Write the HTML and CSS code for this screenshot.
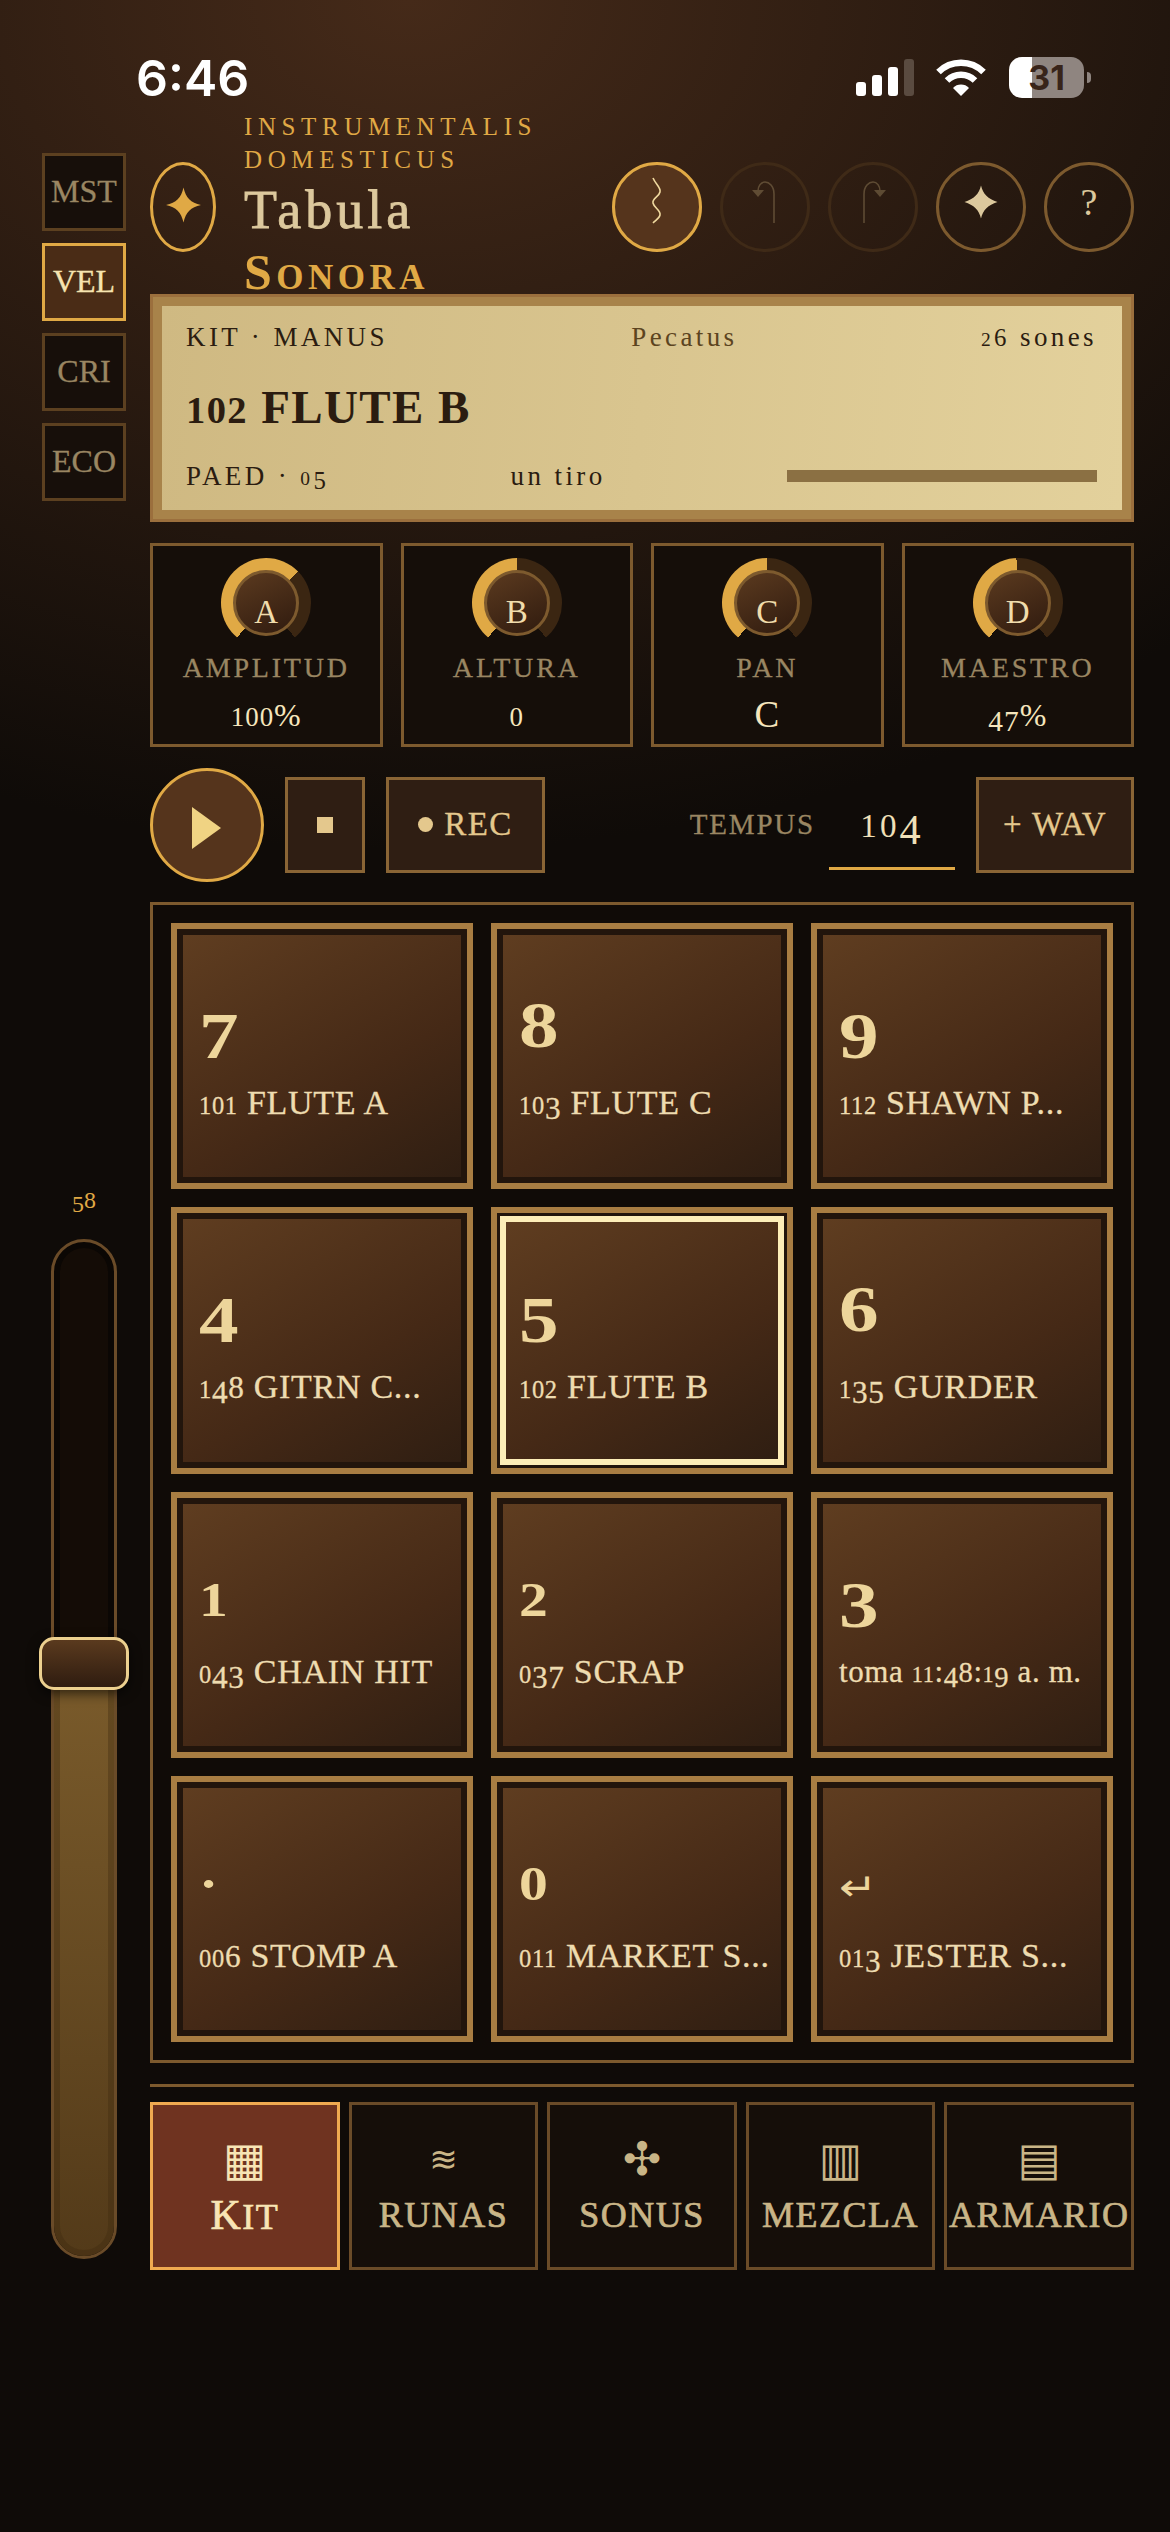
FILE: index.html
```html
<!DOCTYPE html>
<html lang="es">
<head>
<meta charset="utf-8">
<title>Tabula Sonora</title>
<link rel="stylesheet" href="styles.css">
</head>
<body>
<div class="status">
  <div class="time">6:46</div>
  <div class="status-right">
    <svg class="signal" viewBox="0 0 58 37"><rect x="0" y="23" width="10" height="14" rx="3" fill="#fff"/><rect x="16" y="16" width="10" height="21" rx="3" fill="#fff"/><rect x="32" y="8" width="10" height="29" rx="3" fill="#fff"/><rect x="48" y="0" width="10" height="37" rx="3" fill="#5a4b40"/></svg>
    <svg class="wifi" viewBox="0 0 50 37"><path d="M2.5 13A32 32 0 0 1 47.5 13" fill="none" stroke="#fff" stroke-width="6.5"/><path d="M11 21.5A20 20 0 0 1 39 21.5" fill="none" stroke="#fff" stroke-width="6.5"/><path d="M25 37L17 29A11 11 0 0 1 33 29Z" fill="#fff"/></svg>
    <div class="battery">31</div>
    <div class="nub"></div>
  </div>
</div>

<div class="app">
  <aside class="side">
    <div class="chan">MST</div>
    <div class="chan on">VEL</div>
    <div class="chan">CRI</div>
    <div class="chan">ECO</div>
    <div class="fader-box">
      <div class="fader-val"><span class="nd">5</span><span class="na">8</span></div>
      <div class="fader">
        <div class="fader-fill"></div>
        <div class="thumb"></div>
      </div>
    </div>
  </aside>

  <main class="main">
    <header class="head">
      <div class="logo">
        <svg class="logo-star" viewBox="0 0 24 24"><path d="M12 0C13.5 7 17 10.5 24 12C17 13.5 13.5 17 12 24C10.5 17 7 13.5 0 12C7 10.5 10.5 7 12 0Z"/></svg>
      </div>
      <div class="brand">
        <div class="eyebrow">INSTRUMENTALIS DOMESTICUS</div>
        <div class="t1">Tabula</div>
        <div class="t2">Sonora</div>
      </div>
      <div class="tools">
        <button class="tool active"><svg viewBox="0 0 84 84"><path d="M38 13C41 20 46 22 45 27C44 32 37 33 38 38C39 43 46 45 45 50C44.5 53 41 55 38 58" fill="none" stroke="#f0d99f" stroke-width="1.6"/></svg></button>
        <button class="tool off"><svg viewBox="0 0 84 84"><path d="M51 58V29C51 21 46 17 42 17C38 17 35 21 35 26" fill="none" stroke="#8f7a56" stroke-width="1.6"/><path d="M29 25H41L35 32Z" fill="#8f7a56"/></svg></button>
        <button class="tool off"><svg viewBox="0 0 84 84"><path d="M33 58V29C33 21 38 17 42 17C46 17 49 21 49 26" fill="none" stroke="#8f7a56" stroke-width="1.6"/><path d="M43 25H55L49 32Z" fill="#8f7a56"/></svg></button>
        <button class="tool"><svg viewBox="0 0 84 84"><path d="M42 20.5C44 29 49 34 58.5 37C49 40 44 45 42 53.5C40 45 35 40 25.5 37C35 34 40 29 42 20.5Z" fill="#dcc89d"/></svg></button>
        <button class="tool ask">?</button>
      </div>
    </header>

    <section class="lcd">
      <div class="lcd-in">
        <div class="lcd-row">
          <span>KIT · MANUS</span>
          <span class="dim">Pecatus</span>
          <span><span class="no">2</span><span class="na">6</span> sones</span>
        </div>
        <div class="lcd-name"><span class="no">102</span> FLUTE B</div>
        <div class="lcd-row">
          <span>PAED · <span class="no">0</span><span class="nd">5</span></span>
          <span>un tiro</span>
          <span class="lcd-bar"></span>
        </div>
      </div>
    </section>

    <section class="knobs">
      <div class="knob-card">
        <div class="dial" style="--fill:185deg"><div class="cap">A</div></div>
        <div class="k-label">AMPLITUD</div>
        <div class="k-val"><span class="no">100</span>%</div>
      </div>
      <div class="knob-card">
        <div class="dial" style="--fill:140deg"><div class="cap">B</div></div>
        <div class="k-label">ALTURA</div>
        <div class="k-val"><span class="no">0</span></div>
      </div>
      <div class="knob-card">
        <div class="dial" style="--fill:140deg"><div class="cap">C</div></div>
        <div class="k-label">PAN</div>
        <div class="k-val big">C</div>
      </div>
      <div class="knob-card">
        <div class="dial" style="--fill:138deg"><div class="cap">D</div></div>
        <div class="k-label">MAESTRO</div>
        <div class="k-val"><span class="nd">47</span>%</div>
      </div>
    </section>

    <section class="transport">
      <button class="play"><svg viewBox="0 0 29 42"><path d="M0 0L29 21L0 42Z" fill="#f0d383"/></svg></button>
      <button class="tbtn stop"><span class="square"></span></button>
      <button class="tbtn rec"><span class="dot"></span>REC</button>
      <div class="tempo-label">TEMPUS</div>
      <div class="tempo"><span class="no">10</span><span class="nd">4</span></div>
      <button class="tbtn wav">+ WAV</button>
    </section>

    <section class="pads">
      <div class="pad"><div class="pad-in"><div class="key"><span class="kd">7</span></div><div class="name"><span class="no">101</span> FLUTE A</div></div></div>
      <div class="pad"><div class="pad-in"><div class="key">8</div><div class="name"><span class="no">10</span><span class="nd">3</span> FLUTE C</div></div></div>
      <div class="pad"><div class="pad-in"><div class="key"><span class="kd">9</span></div><div class="name"><span class="no">112</span> SHAWN P...</div></div></div>
      <div class="pad"><div class="pad-in"><div class="key"><span class="kd">4</span></div><div class="name"><span class="no">1</span><span class="nd">4</span><span class="na">8</span> GITRN C...</div></div></div>
      <div class="pad sel"><div class="pad-in"><div class="key"><span class="kd">5</span></div><div class="name"><span class="no">102</span> FLUTE B</div></div></div>
      <div class="pad"><div class="pad-in"><div class="key">6</div><div class="name"><span class="no">1</span><span class="nd">35</span> GURDER</div></div></div>
      <div class="pad"><div class="pad-in"><div class="key"><span class="ko">1</span></div><div class="name"><span class="no">0</span><span class="nd">43</span> CHAIN HIT</div></div></div>
      <div class="pad"><div class="pad-in"><div class="key"><span class="ko">2</span></div><div class="name"><span class="no">0</span><span class="nd">37</span> SCRAP</div></div></div>
      <div class="pad"><div class="pad-in"><div class="key"><span class="kd">3</span></div><div class="name small">toma <span class="no">11</span>:<span class="nd">4</span><span class="na">8</span>:<span class="no">1</span><span class="nd">9</span> a. m.</div></div></div>
      <div class="pad"><div class="pad-in"><div class="key"><span class="ko">·</span></div><div class="name"><span class="no">00</span><span class="na">6</span> STOMP A</div></div></div>
      <div class="pad"><div class="pad-in"><div class="key"><span class="ko">0</span></div><div class="name"><span class="no">011</span> MARKET S...</div></div></div>
      <div class="pad"><div class="pad-in"><div class="key"><span class="kr">↵</span></div><div class="name"><span class="no">01</span><span class="nd">3</span> JESTER S...</div></div></div>
    </section>

    <nav class="tabs">
      <div class="tab on"><div class="tab-ico">▦</div><div class="tab-label">KIT</div></div>
      <div class="tab"><div class="tab-ico wave">≋</div><div class="tab-label">RUNAS</div></div>
      <div class="tab"><div class="tab-ico">✣</div><div class="tab-label">SONUS</div></div>
      <div class="tab"><div class="tab-ico">▥</div><div class="tab-label">MEZCLA</div></div>
      <div class="tab"><div class="tab-ico">▤</div><div class="tab-label">ARMARIO</div></div>
    </nav>
  </main>
</div>
</body>
</html>
```
FILE: styles.css
```css
* { box-sizing: border-box; }
html, body { margin: 0; padding: 0; }
body {
  width: 1170px;
  height: 2532px;
  overflow: hidden;
  font-family: "Liberation Serif", serif;
  color: #eedcb0;
  background: #0f0b08 radial-gradient(ellipse 1170px 850px at 35% 0, #452a19, #0f0b08) no-repeat;
}
button { font-family: inherit; padding: 0; margin: 0; cursor: pointer; }

/* old-style numeral approximations */
.no { font-size: .72em; }
.nd { font-size: .92em; vertical-align: -.16em; line-height: 0; }
.na { font-size: .92em; line-height: 0; }

/* status bar */
.status {
  height: 120px;
  padding: 57px 79px 0 136px;
  display: flex;
  justify-content: space-between;
  align-items: flex-start;
}
.time {
  font-family: Inter, sans-serif;
  font-weight: 600;
  font-size: 50px;
  line-height: 43px;
  color: #fff;
}
.status-right { display: flex; align-items: center; height: 41px; }
.signal { width: 58px; height: 37px; margin-right: 22px; }
.wifi { width: 50px; height: 37px; margin-right: 23px; }
.battery {
  width: 75px;
  height: 41px;
  border-radius: 13px;
  background: linear-gradient(90deg, #fff 31%, #8f8580 31%);
  font-family: Inter, sans-serif;
  font-weight: 700;
  font-size: 34px;
  line-height: 41px;
  text-align: center;
  color: #38241a;
}
.nub { width: 4px; height: 11px; margin-left: 3px; border-radius: 0 4px 4px 0; background: #8f8580; }

/* layout */
.app { display: flex; gap: 24px; padding: 0 36px 0 42px; height: 2151px; }
.side { width: 84px; flex: none; display: flex; flex-direction: column; gap: 12px; padding: 33px 0 12px; }
.main { flex: 1; min-width: 0; }

.chan {
  height: 78px;
  border: 3px solid #5c4020;
  background: #170f0a;
  color: #9a8662;
  font-size: 32px;
  padding-bottom: 2px;
  display: flex;
  align-items: center;
  justify-content: center;
  -webkit-text-stroke: .3px currentColor;
}
.chan.on { border-color: #e0a945; background: #4a2c16; color: #f6e4b0; }

.fader-box { margin-top: auto; display: flex; flex-direction: column; align-items: center; }
.fader-val { color: #e0a945; font-size: 26px; line-height: 30px; height: 54px; }
.fader {
  position: relative;
  width: 66px;
  height: 1020px;
  border: 3px solid #6a4b28;
  border-radius: 33px;
  background: #140c06;
  box-shadow: inset 0 0 0 6px #0b0704;
  display: flex;
  align-items: flex-end;
}
.fader-fill {
  width: 100%;
  height: 58%;
  border-radius: 0 0 30px 30px;
  background: linear-gradient(180deg, #7a5b2b, #533a19);
  box-shadow: inset 0 0 0 6px rgba(60, 40, 15, .35);
}
.thumb {
  position: absolute;
  left: -15px;
  top: 395px;
  width: 90px;
  height: 53px;
  border: 3px solid #ecd08f;
  border-radius: 15px;
  background: linear-gradient(180deg, #5a3a1e, #2f1c10);
  box-shadow: 0 4px 12px rgba(0, 0, 0, .6);
}

/* header */
.head { height: 174px; display: flex; align-items: center; }
.logo {
  width: 66px;
  height: 90px;
  flex: none;
  border: 3px solid #e0a945;
  border-radius: 50%;
  display: flex;
  align-items: center;
  justify-content: center;
}
.logo-star { width: 35px; height: 36px; fill: #e0a945; margin-top: -5px; }
.brand { width: 340px; flex: none; margin-left: 28px; }
.eyebrow { color: #e0a945; font-size: 25px; line-height: 33px; letter-spacing: 5.6px; margin-top: -2px; }
.t1 { color: #dcc89d; font-size: 54px; line-height: 64px; letter-spacing: 4px; -webkit-text-stroke: .8px currentColor; margin-top: 2px; }
.t2 { color: #e0a945; font-size: 50px; line-height: 60px; font-weight: 700; font-variant: small-caps; letter-spacing: 4.5px; }
.tools { margin-left: auto; display: flex; gap: 18px; }
.tool {
  width: 90px;
  height: 90px;
  border: 3px solid #7d5a2e;
  border-radius: 50%;
  background: transparent;
  display: block;
}
.tool svg { display: block; width: 84px; height: 84px; }
.tool.active { background: #55341c; border-color: #e0a945; }
.tool.off { border-color: #3f2a17; }
.tool.off svg { opacity: .5; }
.tool.ask { color: #dcc89d; font-size: 38px; line-height: 72px; padding-bottom: 10px; }

/* lcd */
.lcd {
  height: 228px;
  border: 3px solid #9b6f3d;
  background: #a8834a;
  padding: 9px;
  position: relative;
}
.lcd-in {
  height: 100%;
  background: linear-gradient(95deg, #cfb982, #e3d19c);
  padding: 11px 25px 0 24px;
  color: #2b1c10;
  display: flex;
  flex-direction: column;
}
.lcd-row {
  display: flex;
  justify-content: space-between;
  align-items: center;
  height: 40px;
  font-size: 27px;
  letter-spacing: 3.4px;
}
.dim { color: #5c4420; }
.lcd-name { font-size: 47px; line-height: 90px; font-weight: 700; letter-spacing: 1.4px; margin: 5px 0 1px; }
.lcd-name .no { font-size: .82em; }
.lcd-bar { width: 310px; height: 12px; background: #8b7043; }

/* knobs */
.knobs { display: grid; grid-template-columns: repeat(4, 1fr); gap: 18px; margin-top: 21px; }
.knob-card {
  height: 204px;
  border: 3px solid #7d5a2e;
  background: #150e09;
  padding-top: 12px;
  display: flex;
  flex-direction: column;
  align-items: center;
}
.dial {
  width: 90px;
  height: 90px;
  flex: none;
  border-radius: 50%;
  background: conic-gradient(from 220deg, #e0a945 var(--fill), #3b2612 var(--fill), #3b2612 280deg, transparent 280deg);
  display: flex;
  align-items: center;
  justify-content: center;
}
.cap {
  width: 66px;
  height: 66px;
  border: 3px solid #7d5a2e;
  border-radius: 50%;
  background: linear-gradient(155deg, #5b3a1f, #301b0f);
  color: #f0dcac;
  font-size: 33px;
  line-height: 1;
  display: flex;
  align-items: flex-end;
  justify-content: center;
  padding-bottom: 4px;
}
.k-label { color: #9a8662; font-size: 28px; line-height: 36px; letter-spacing: 2.8px; margin-top: 2px; -webkit-text-stroke: .3px currentColor; }
.k-val { color: #f6e6bd; font-size: 32px; line-height: 40px; margin-top: 9px; letter-spacing: 1px; }
.k-val .no { font-size: .84em; }
.k-val.big { font-size: 37px; }

/* transport */
.transport { display: flex; align-items: center; margin-top: 21px; height: 113px; }
.play {
  width: 114px;
  height: 114px;
  flex: none;
  border: 3px solid #e0a945;
  border-radius: 50%;
  background: #55341c;
  display: flex;
  align-items: center;
  justify-content: center;
  margin-right: 21px;
}
.play svg { width: 29px; height: 42px; margin: 6px 0 0 -2px; }
.tbtn {
  height: 96px;
  flex: none;
  border: 3px solid #8a6535;
  background: #2f1e13;
  color: #e4c88d;
  font-size: 33px;
  letter-spacing: 1.4px;
  display: flex;
  align-items: center;
  justify-content: center;
  -webkit-text-stroke: .3px currentColor;
}
.stop { width: 80px; margin-right: 21px; }
.square { width: 16px; height: 16px; background: #e4c88d; }
.rec { width: 159px; }
.dot { width: 15px; height: 15px; border-radius: 50%; background: #e4c88d; margin-right: 11px; }
.tempo-label { margin-left: auto; color: #9a8662; font-size: 29px; letter-spacing: 1.8px; margin-right: 14px; -webkit-text-stroke: .3px currentColor; }
.tempo {
  width: 126px;
  height: 90px;
  border-bottom: 3px solid #e0a945;
  color: #f0e0b8;
  font-size: 46px;
  line-height: 84px;
  text-align: center;
  margin-right: 21px;
  letter-spacing: 3px;
}
.wav { width: 158px; }

/* pads */
.pads {
  display: grid;
  grid-template-columns: repeat(3, 1fr);
  grid-auto-rows: 266.25px;
  gap: 18px;
  margin-top: 21px;
  padding: 18px;
  border: 3px solid #7d5a2e;
  background: #100b07;
}
.pad {
  border: 6px solid #a87d42;
  background: #22150c;
  padding: 6px;
  display: flex;
}
.pad-in {
  flex: 1;
  min-width: 0;
  padding: 55px 0 0 16px;
  background-image: linear-gradient(150deg, #5f3d20 0%, #452916 60%, #2f1e12 100%);
}
.pad.sel { padding: 3px; }
.pad.sel .pad-in { border: 6px solid #fdeeb8; padding: 52px 0 0 13px; }
.key {
  height: 70px;
  font-size: 66px;
  line-height: 70px;
  font-weight: 700;
  color: #edd59b;
  transform: scaleX(1.2);
  transform-origin: left center;
}
.kd { vertical-align: -11px; line-height: 0; }
.ko { font-size: 48px; line-height: 0; }
.kr { font-family: "DejaVu Sans", sans-serif; font-size: 38px; font-weight: 400; line-height: 0; }
.name {
  margin-top: 23px;
  font-size: 34px;
  line-height: 40px;
  letter-spacing: .7px;
  color: #eedcb0;
  white-space: nowrap;
  -webkit-text-stroke: .3px currentColor;
}
.name.small { font-size: 31px; letter-spacing: .6px; }

/* tabs */
.tabs {
  display: grid;
  grid-template-columns: repeat(5, 1fr);
  gap: 9px;
  margin-top: 21px;
  padding-top: 15px;
  border-top: 3px solid #7d5a2e;
}
.tab {
  height: 168px;
  min-width: 0;
  border: 3px solid #6a4b28;
  background: #150e09;
  color: #c9b587;
  display: flex;
  flex-direction: column;
  align-items: center;
  padding-top: 32px;
}
.tab.on { background: #6f3320; border-color: #f0aa50; color: #f8e5b5; }
.tab-ico { font-family: "DejaVu Sans", sans-serif; font-size: 46px; line-height: 44px; height: 56px; }
.tab-ico.wave { font-size: 34px; }
.tab-label { font-size: 36px; line-height: 44px; letter-spacing: 1.5px; white-space: nowrap; -webkit-text-stroke: .7px currentColor; }
.tab.on .tab-label::first-letter { font-size: 42px; }
```
